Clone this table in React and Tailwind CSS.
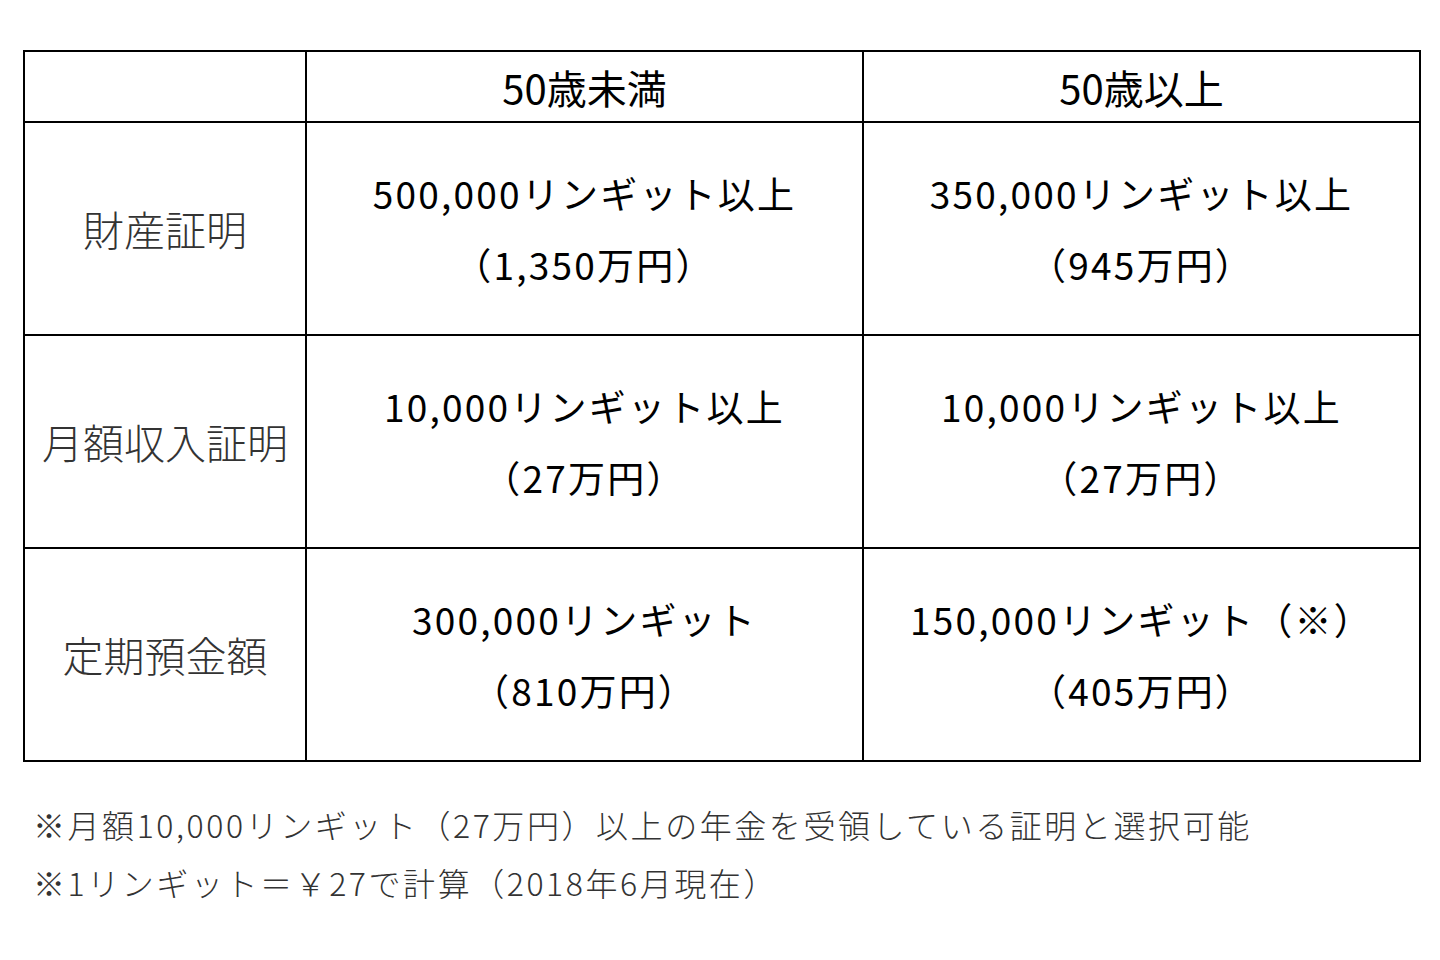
const HEAD = ["", "50歳未満", "50歳以上"];

const ROWS = [
  {
    label: "財産証明",
    cells: [
      ["500,000リンギット以上", "（1,350万円）"],
      ["350,000リンギット以上", "（945万円）"],
    ],
  },
  {
    label: "月額収入証明",
    cells: [
      ["10,000リンギット以上", "（27万円）"],
      ["10,000リンギット以上", "（27万円）"],
    ],
  },
  {
    label: "定期預金額",
    cells: [
      ["300,000リンギット", "（810万円）"],
      ["150,000リンギット（※）", "（405万円）"],
    ],
  },
];

const font = { fontFamily: '"Noto Sans CJK JP", "Noto Sans", sans-serif' };

export default function App() {
  return (
    <div className="min-h-[960px] w-[1440px] bg-white pl-[23px] pt-[50px]" style={font}>
      <table className="w-[1396px] table-fixed border-collapse border-2 border-black">
        <colgroup>
          <col className="w-[282px]" />
          <col className="w-[557px]" />
          <col className="w-[557px]" />
        </colgroup>
        <thead>
          <tr className="h-[71px]">
            {HEAD.map((h, i) => (
              <th key={i} className="border-2 border-black text-center align-middle text-[40px] font-normal text-black">
                {h}
              </th>
            ))}
          </tr>
        </thead>
        <tbody>
          {ROWS.map((row) => (
            <tr key={row.label} className="h-[213px]">
              <td className="border-2 border-black text-center align-middle text-[41px] font-light text-[#333]">
                {row.label}
              </td>
              {row.cells.map((lines, i) => (
                <td key={i} className="border-2 border-black text-center align-middle text-[37px] leading-[71px] text-black">
                  {lines.map((l) => (
                    <div key={l} className="tracking-[0.06em]">{l}</div>
                  ))}
                </td>
              ))}
            </tr>
          ))}
        </tbody>
      </table>

      {/* 注記 */}
      <div className="mt-[33px] pl-[10px] text-[32px] font-light leading-[58px] tracking-[0.08em] text-[#333]">
        <p>※月額10,000リンギット（27万円）以上の年金を受領している証明と選択可能</p>
        <p>※1リンギット＝￥27で計算（2018年6月現在）</p>
      </div>
    </div>
  );
}
